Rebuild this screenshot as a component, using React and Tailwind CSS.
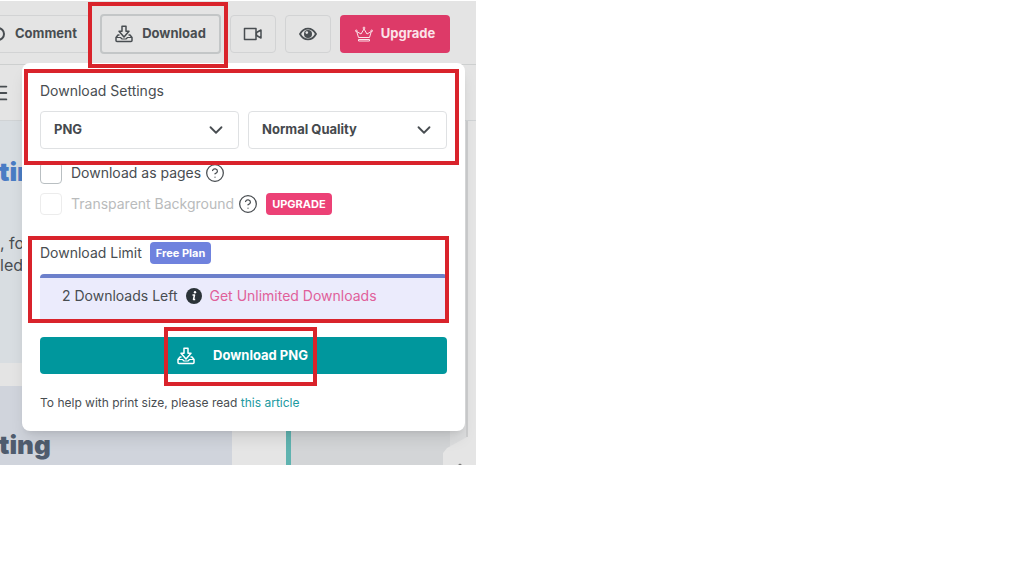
import React, { useState } from 'react';
import { ChevronDown, CircleHelp, Menu } from 'lucide-react';

const DownloadIcon = ({ className }) => (
  <svg
    className={className}
    viewBox="0 0 18 18"
    fill="none"
    stroke="currentColor"
    strokeWidth="1.5"
    strokeLinejoin="round"
    aria-hidden="true"
  >
    <path d="M7 1.200h4v5h3L9 12 4 6.200h3z" />
    <path d="M4.500 10H3l-2 2.500v3a1 1 0 0 0 1 1h14a1 1 0 0 0 1-1v-3L15 10h-1.500" />
    <path d="M1 12.500h4.500L7 14h4l1.500-1.500H17" strokeWidth="1.200" />
  </svg>
);

const VideoIcon = ({ className }) => (
  <svg
    className={className}
    viewBox="0 0 20 14"
    fill="none"
    stroke="currentColor"
    strokeWidth="1.5"
    strokeLinejoin="round"
    aria-hidden="true"
  >
    <path d="M1.500 1.500h11.500v11H1.500z" />
    <path d="M13.500 5.500 18 3v8l-4.500-2.500z" />
  </svg>
);

const EyeIcon = ({ className }) => (
  <svg className={className} viewBox="0 0 18 14" fill="none" aria-hidden="true">
    <path
      d="M1 7c2-3.600 4.700-5.400 8-5.400S15 3.400 17 7c-2 3.600-4.700 5.400-8 5.400S3 10.600 1 7z"
      stroke="currentColor"
      strokeWidth="1.8"
    />
    <circle cx="9" cy="7" r="4" fill="currentColor" />
    <circle cx="7.800" cy="5.600" r="1.300" fill="#e4e4e4" />
  </svg>
);

const CrownIcon = ({ className }) => (
  <svg
    className={className}
    viewBox="0 0 18 16"
    fill="none"
    stroke="currentColor"
    strokeLinejoin="round"
    aria-hidden="true"
  >
    <path d="M3.500 11.500 1.700 5.500 6 8l3-5 3 5 4.300-2.500-1.800 6z" />
    <path d="M3.500 13.500h11v1.500h-11z" />
    <circle cx="1.300" cy="4.800" r=".8" />
    <circle cx="9" cy="2" r=".9" />
    <circle cx="16.700" cy="4.800" r=".8" />
  </svg>
);

const InfoIcon = ({ className }) => (
  <svg className={className} viewBox="0 0 16 16" aria-hidden="true">
    <circle cx="8" cy="8" r="8" fill="#2b3338" />
    <circle cx="9" cy="4.300" r="1.200" fill="#fff" />
    <path
      d="M6.500 7h2l-1 4.500h1.700"
      fill="none"
      stroke="#fff"
      strokeWidth="1.5"
      strokeLinejoin="round"
    />
  </svg>
);

// red frame drawn around the step the reader has to look at
const Highlight = ({ className }) => (
  <span
    className={`pointer-events-none absolute z-20 border-4 border-[#d9232b] ${className}`}
  />
);

const SelectBox = ({ label, value, onChange, options }) => (
  <div className="relative flex-1">
    <select
      aria-label={label}
      value={value}
      onChange={(e) => onChange(e.target.value)}
      className="h-[38px] w-full appearance-none rounded border border-[#dfe1e3] bg-white px-[13px] text-[13px] font-bold text-[#45494d]"
    >
      {options.map((option) => (
        <option key={option}>{option}</option>
      ))}
    </select>
    <ChevronDown className="pointer-events-none absolute right-3 top-2 size-[22px]" />
  </div>
);

const Header = () => (
  <header className="flex items-center gap-[9px] border-b border-[#cdcfcf] pb-[10px] pt-[13px] text-[13px] font-bold">
    <button className="-ml-[10px] flex h-[38px] w-[101px] shrink-0 items-center gap-[10px] rounded border border-[#d2d3d4]">
      <span className="size-[14px] rounded-full border-2 border-current" />
      Comment
    </button>
    <div className="relative">
      <button className="flex h-10 w-[121px] items-center justify-center gap-[9px] rounded border-2 border-[#c3c6c7]">
        <DownloadIcon className="size-[18px]" />
        Download
      </button>
      <Highlight className="-left-3 -right-[7px] -top-3 -bottom-[14px]" />
    </div>
    <button
      aria-label="Record video"
      className="flex h-[38px] w-[46px] items-center justify-center rounded border border-[#d2d3d4]"
    >
      <VideoIcon className="h-[14px] w-5" />
    </button>
    <button
      aria-label="Preview"
      className="flex h-[38px] w-[46px] items-center justify-center rounded border border-[#d2d3d4]"
    >
      <EyeIcon className="h-[14px] w-[18px]" />
    </button>
    <button className="flex h-[38px] w-[110px] items-center justify-center gap-2 rounded bg-[#dd3a68] text-[#fbe3ea]">
      <CrownIcon className="h-4 w-[18px]" />
      Upgrade
    </button>
  </header>
);

const Canvas = () => (
  <div className="flex h-[344px]">
    <div className="flex w-[232px] flex-col justify-between">
      <div className="h-[242px] overflow-hidden bg-[#d8dde1] pt-[33px]">
        <h3 className="-ml-px text-[26px] font-black leading-[36px] text-[#4a7cc4]">
          ting
        </h3>
        <p className="mt-[42px] text-base leading-[22px]">
          , fo
          <br />
          led
        </p>
      </div>
      <div className="h-[79px] bg-[#d0d4dc] pt-[41px]">
        <h3 className="-ml-px text-[26px] font-black leading-[36px] text-[#4f5c6e]">
          ting
        </h3>
      </div>
    </div>
    <div className="w-[54px] bg-[#e5e5e5]" />
    <div className="w-[5px] bg-[#5fb3b0]" />
    <div className="flex-1 bg-[#d3d5d7]" />
    <div className="flex w-[33px] items-end bg-[#d3d5d7]">
      <svg className="h-[344px] w-[33px]" viewBox="0 0 33 344" aria-hidden="true">
        <path d="M7 0h26v344H7z" fill="#dcddde" />
        <path d="M24 0h9v344H0v-12l4-5 20-11z" fill="#e5e5e5" />
        <path d="M24 0v316" stroke="#cdcecf" strokeWidth="2" />
        <path d="m15 344 2-1.500 2 1.500z" fill="#777" />
      </svg>
    </div>
  </div>
);

const DownloadPanel = () => {
  const [format, setFormat] = useState('PNG');
  const [quality, setQuality] = useState('Normal Quality');
  const [asPages, setAsPages] = useState(false);

  return (
    <div className="absolute left-[22px] right-[11px] top-[62px] z-10 rounded-lg bg-white px-[18px] pb-5 pt-[18px] shadow-lg">
      <div className="relative">
        <h2 className="text-sm">Download Settings</h2>
        <div className="mt-[10px] flex gap-[9px]">
          <SelectBox
            label="Format"
            value={format}
            onChange={setFormat}
            options={['PNG', 'JPG', 'PDF']}
          />
          <SelectBox
            label="Quality"
            value={quality}
            onChange={setQuality}
            options={['Normal Quality', 'High Quality']}
          />
        </div>
        <Highlight className="-bottom-4 -left-4 -right-3 -top-3" />
      </div>

      <div className="mt-[13px] flex h-[22px] items-center">
        <input
          id="pages"
          type="checkbox"
          checked={asPages}
          onChange={(e) => setAsPages(e.target.checked)}
          className="size-[22px] appearance-none rounded-sm border border-[#b9bfc2] checked:bg-[#00979d]"
        />
        <label htmlFor="pages" className="ml-[9px] text-sm">
          Download as pages
        </label>
        <CircleHelp className="ml-1 size-5" strokeWidth={1.5} />
      </div>
      <div className="mt-[9px] flex h-[22px] items-center">
        <input
          id="transparent"
          type="checkbox"
          disabled
          className="size-[22px] appearance-none rounded-sm border border-[#ececec]"
        />
        <label htmlFor="transparent" className="ml-[9px] text-sm text-[#b9bbbc]">
          Transparent Background
        </label>
        <CircleHelp className="ml-1 size-5" strokeWidth={1.5} />
        <span className="ml-2 rounded bg-[#ec4176] px-[6px] text-[11px] font-bold leading-[22px] text-white">
          UPGRADE
        </span>
      </div>

      <div className="relative mt-[27px]">
        <div className="flex items-center">
          <h2 className="text-sm">Download Limit</h2>
          <span className="ml-2 rounded bg-[#6f82de] px-[6px] text-[11px] font-bold leading-[22px] text-white">
            Free Plan
          </span>
        </div>
        <div className="mt-[10px] flex h-[45px] items-center rounded-t border-t-4 border-[#6c80cb] bg-[#ebebfc] pb-[6px] pl-[22px] text-sm">
          <span>2 Downloads Left</span>
          <InfoIcon className="ml-2 size-4" />
          <a href="#upgrade" className="ml-2 text-[#e0609a]">
            Get Unlimited Downloads
          </a>
        </div>
        <Highlight className="-bottom-1 -left-3 -right-[2px] -top-[6px]" />
      </div>

      <div className="relative mt-[18px]">
        <button className="flex h-[37px] w-full items-center justify-center gap-[18px] rounded bg-[#00979d] pr-[2px] text-[13px] font-bold text-white">
          <DownloadIcon className="size-[18px]" />
          Download PNG
        </button>
        <Highlight className="-bottom-3 -top-[10px] left-[124px] right-[130px]" />
      </div>

      <p className="mt-[21px] text-xs">
        To help with print size, please read{' '}
        <a href="#article" className="text-[#20999f]">
          this article
        </a>
      </p>
    </div>
  );
};

const App = () => (
  <main className="min-h-screen bg-white pt-px font-['Inter',sans-serif] text-[#484d51]">
    <section className="relative max-w-[476px] overflow-hidden bg-[#e4e4e4]">
      <Header />
      <div className="flex h-14 items-center border-b border-[#d0d3d5]">
        <button aria-label="Menu" className="-ml-3">
          <Menu className="size-[22px]" />
        </button>
      </div>
      <Canvas />
      <DownloadPanel />
    </section>
  </main>
);

export default App;
